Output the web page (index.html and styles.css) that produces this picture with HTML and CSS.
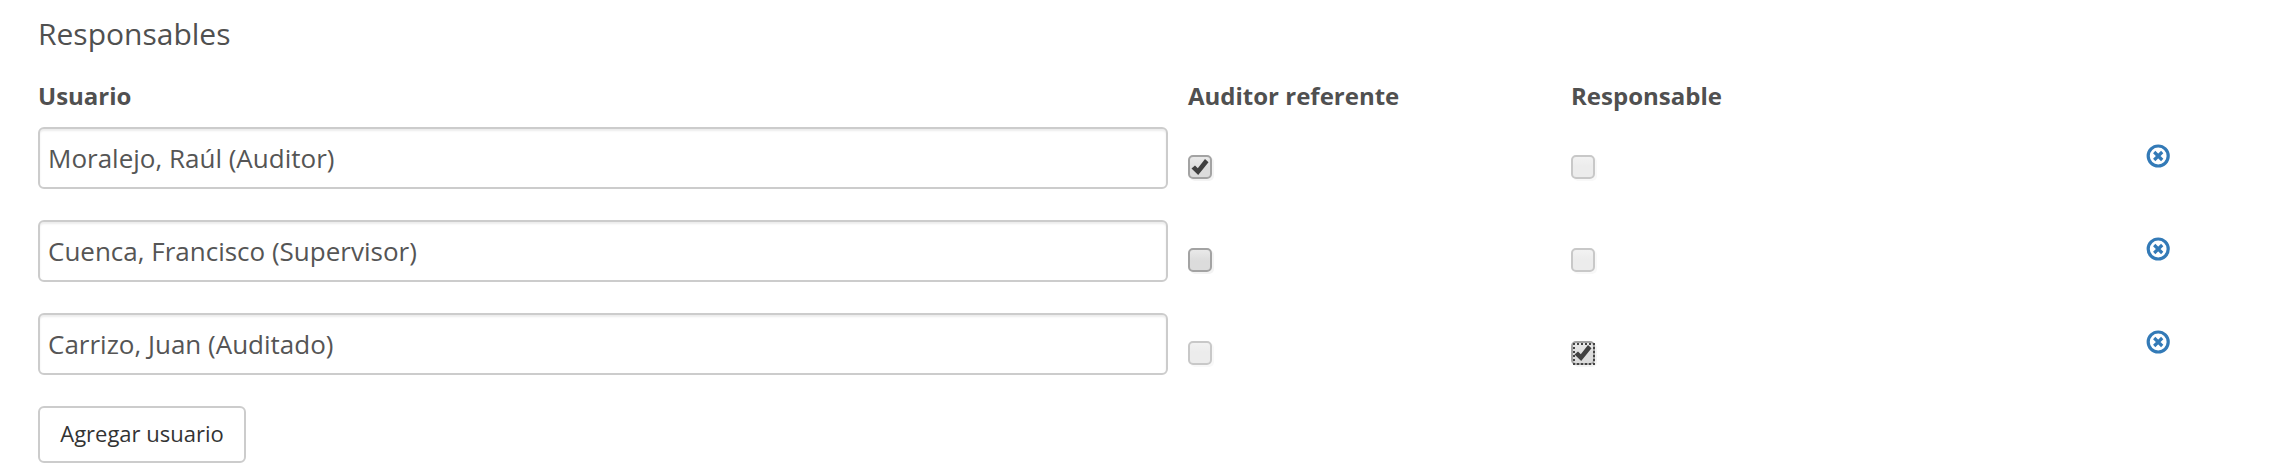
FILE: index.html
```html
<!DOCTYPE html>
<html lang="es">
<head>
<meta charset="utf-8">
<title>Responsables</title>
<link rel="stylesheet" href="styles.css">
</head>
<body>
<svg class="defs" width="0" height="0">
  <symbol id="check" viewBox="0 0 24 24"><path d="M3.5 13.5 7 10.5 9.8 13.3 17 4 20.5 7.2 10.2 20Z"/></symbol>
  <symbol id="remove" viewBox="0 0 24 24"><circle cx="12.2" cy="12" r="10"/><path d="M8.2 8 16.2 16M16.2 8 8.2 16"/></symbol>
</svg>
<main class="panel">
  <h1 class="title">Responsables</h1>
  <div class="grid head">
    <span>Usuario</span><span>Auditor referente</span><span>Responsable</span>
  </div>
  <div class="grid row">
    <div class="field">Moralejo, Raúl (Auditor)</div>
    <span class="box"><svg><use href="#check"/></svg></span>
    <span class="box disabled"></span>
    <a class="remove"><svg><use href="#remove"/></svg></a>
  </div>
  <div class="grid row">
    <div class="field">Cuenca, Francisco (Supervisor)</div>
    <span class="box"></span>
    <span class="box disabled"></span>
    <a class="remove"><svg><use href="#remove"/></svg></a>
  </div>
  <div class="grid row">
    <div class="field">Carrizo, Juan (Auditado)</div>
    <span class="box disabled"></span>
    <span class="box"><svg><use href="#check"/><rect class="focus" x="3" y="3" width="20" height="20"/></svg></span>
    <a class="remove"><svg><use href="#remove"/></svg></a>
  </div>
  <button class="add">Agregar usuario</button>
</main>
</body>
</html>
```
FILE: styles.css
```css
* { box-sizing: border-box; }
body { margin: 0; background: #fff; color: #505050; font-family: "Open Sans", sans-serif; }
.defs { display: block; }
.panel { padding: 12px 0 0 38px; }
.title { margin: 0; font-size: 30px; line-height: 44px; font-weight: 400; }
.grid { display: grid; grid-template-columns: 1150px 383px 575px 24px; }
.head { height: 71px; padding-top: 23px; font-size: 24px; line-height: 34px; font-weight: 700; }
.row { height: 62px; margin-bottom: 31px; align-items: start; }
.field { width: 1130px; height: 62px; padding: 0 8px; border: 2px solid #ccc; border-radius: 6px; box-shadow: inset 0 2px 2px rgba(0,0,0,.075); font-size: 26px; line-height: 58px; color: #555; }
.box { display: block; width: 24px; height: 24px; margin-top: 28px; border: 2px solid #a3a3a3; border-radius: 5px; background: linear-gradient(#e9e9e9, #dcdcdc 55%); box-shadow: 2px 2px 0 #f3f3f3; }
.box svg { display: block; width: 24px; height: 24px; margin: -2px; fill: #404040; }
.disabled { border-color: #c8c8c8; background: linear-gradient(#f2f2f2, #ececec 45%); box-shadow: 2px 2px 0 #f8f8f8; }
.focus { fill: none; stroke: #444; stroke-width: 2; stroke-dasharray: 2 2; stroke-dashoffset: 1; shape-rendering: crispEdges; }
.remove { display: block; margin-top: 17px; }
.remove svg { display: block; width: 24px; height: 24px; fill: none; stroke: #337ab7; stroke-width: 3.2; }
.add { display: block; width: 208px; height: 57px; padding: 0 0 3px; border: 2px solid #ccc; border-radius: 6px; background: #fff; color: #333; font: 22px/50px "Open Sans", sans-serif; }
```
